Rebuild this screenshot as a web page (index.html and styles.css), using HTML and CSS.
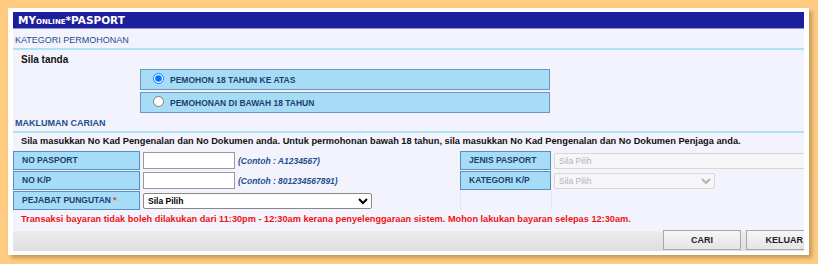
FILE: index.html
```html
<!DOCTYPE html>
<html lang="ms">

<head>
  <meta charset="UTF-8" />
  <title>MYonline*PASPORT</title>
  <link rel="stylesheet" href="styles.css">
</head>

<body>
  <div class="card">
    <div class="inner">
      <!-- tajuk -->
      <div class="brand">MY<span class="sc">online</span>*PASPORT</div>

      <div class="section-title">KATEGORI PERMOHONAN</div>
      <div class="note">Sila tanda</div>

      <div class="choices">
        <label class="choice"><input type="radio" name="kategori" checked /> PEMOHON 18 TAHUN KE ATAS</label>
        <label class="choice"><input type="radio" name="kategori" /> PEMOHONAN DI BAWAH 18 TAHUN</label>
      </div>

      <div class="section-title bold">MAKLUMAN CARIAN</div>
      <div class="note small">Sila masukkan No Kad Pengenalan dan No Dokumen anda. Untuk permohonan bawah 18 tahun, sila masukkan No Kad Pengenalan dan No Dokumen Penjaga anda.</div>

      <!-- borang carian -->
      <div class="form-grid">
        <div class="lbl">NO PASPORT</div>
        <div class="cell"><input class="txt" type="text" /> <span class="hint">(Contoh : A1234567)</span></div>
        <div class="lbl">JENIS PASPORT</div>
        <div class="cell"><select class="sel wide" disabled><option>Sila Pilih</option></select></div>

        <div class="lbl">NO K/P</div>
        <div class="cell"><input class="txt" type="text" /> <span class="hint">(Contoh : 801234567891)</span></div>
        <div class="lbl">KATEGORI K/P</div>
        <div class="cell"><select class="sel short" disabled><option>Sila Pilih</option></select></div>

        <div class="lbl">PEJABAT PUNGUTAN <span class="req">*</span></div>
        <div class="cell"><select class="sel office"><option>Sila Pilih</option></select></div>
        <div class="empty"></div>
        <div class="empty"></div>
      </div>

      <div class="warning">Transaksi bayaran tidak boleh dilakukan dari 11:30pm - 12:30am kerana penyelenggaraan sistem. Mohon lakukan bayaran selepas 12:30am.</div>

      <div class="actions">
        <button>CARI</button>
        <button>KELUAR</button>
      </div>
    </div>
  </div>
</body>

</html>
```

FILE: styles.css
```css
* {
  box-sizing: border-box;
}
body {
  margin: 0;
  padding: 8px;
  background-color: #fecb80;
  font-family: 'Liberation Sans', Arial, sans-serif;
}
.card {
  width: 801px;
  height: 247px;
  background: #fff;
  padding: 4px 5px 0 5px;
  box-shadow: 3px 3px 4px rgba(90, 60, 20, 0.35);
}
.inner {
  width: 791px;
  height: 239px;
  overflow: hidden;
  background: #f3f3fd;
}
.brand {
  height: 17px;
  background: #1c1f9c;
  border-bottom: 1px solid #8e90d6;
  color: #fff;
  font-family: 'DejaVu Sans', Verdana, sans-serif;
  font-weight: bold;
  font-size: 10.5px;
  line-height: 16px;
  padding-left: 5px;
}
.sc {
  font-variant: small-caps;
}
.section-title {
  height: 21px;
  padding-top: 4px;
  line-height: 14px;
  border-bottom: 2px solid #aee0f7;
  color: #1d4f8d;
  font-size: 9px;
  padding-left: 2px;
}
.section-title.bold {
  height: 20px;
  padding-top: 3px;
  font-weight: bold;
}
.note {
  height: 17px;
  line-height: 19px;
  padding-left: 8px;
  font-size: 10px;
  font-weight: bold;
  color: #111;
}
.note.small {
  font-size: 9.25px;
  line-height: 17px;
}
.choices {
  display: flex;
  flex-direction: column;
  gap: 2px;
  padding: 2px 0 0 127px;
}
.choice {
  display: flex;
  align-items: center;
  width: 410px;
  height: 21px;
  background: #a7dcf6;
  border: 1px solid #6a97c6;
  color: #1d3f6e;
  font-size: 8.5px;
  font-weight: bold;
  padding-left: 12px;
}
.choice input {
  margin: 0 6px 2px 0;
  width: 11px;
  height: 11px;
}
.form-grid {
  display: grid;
  grid-template-columns: 127px 320px 91px auto;
  grid-auto-rows: 19px;
  row-gap: 1px;
  margin-top: 1px;
}
.lbl {
  background: #a7dcf6;
  border: 1px solid #5b8ec0;
  color: #1d3f6e;
  font-size: 8.5px;
  font-weight: bold;
  line-height: 17px;
  padding-left: 8px;
}
.req {
  color: #e33;
}
.cell {
  display: flex;
  align-items: center;
  gap: 3px;
  padding-left: 3px;
}
.empty {
  border-left: 1px solid #e6e6f2;
}
.txt {
  width: 92px;
  height: 17px;
  margin: 0;
  border: 1px solid #999;
  border-radius: 0;
  background: #fff;
}
.hint {
  color: #1d4f8d;
  font-size: 8.5px;
  font-style: italic;
  font-weight: bold;
}
.sel {
  height: 16px;
  margin: 0;
  font-family: 'Liberation Sans', Arial, sans-serif;
  font-size: 8.5px;
  border: 1px solid #ccc;
  border-radius: 2px;
  background: #f8f8f8;
  color: #999;
}
.sel.wide {
  width: 275px;
}
.sel.short {
  width: 161px;
}
.sel.office {
  width: 229px;
  border-color: #888;
  background: #fff;
  color: #000;
  font-weight: bold;
}
.warning {
  height: 21px;
  line-height: 18px;
  padding-left: 8px;
  color: #f01313;
  font-size: 9.2px;
  font-weight: bold;
}
.actions {
  display: flex;
  justify-content: flex-end;
  gap: 5px;
  height: 20px;
  margin-right: -2px;
  background: linear-gradient(#ececec, #dedede);
}
button {
  width: 78px;
  height: 20px;
  margin-top: -1px;
  background: linear-gradient(#f6f6f6, #e4e4e4);
  border: 1px solid #a8a8a8;
  font-family: 'Liberation Sans', Arial, sans-serif;
  font-size: 9px;
  font-weight: bold;
  color: #222;
}
button:last-child {
  width: 60px;
  text-align: right;
  padding-right: 2px;
}
```
